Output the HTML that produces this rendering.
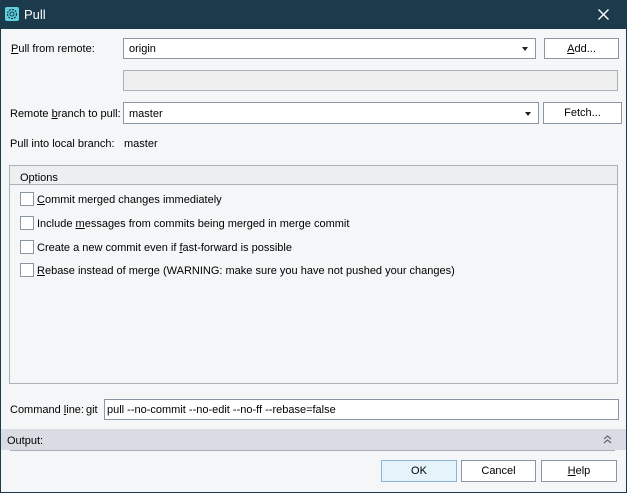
<!DOCTYPE html><html><head><style>
*{margin:0;padding:0;box-sizing:border-box}
body{width:627px;height:493px;background:#f5f6f7;font-family:"Liberation Sans",sans-serif;font-size:11px;color:#000;position:relative;overflow:hidden}
.a{position:absolute}
.t{position:absolute;line-height:14px;white-space:nowrap}
.box{position:absolute;background:#fff;border:1px solid #8a96a3}
.btn{position:absolute;background:#fff;border:1px solid #8a96a3;text-align:center;line-height:20px}
.cb{position:absolute;left:20px;width:14px;height:14px;border:1px solid #8a96a3;background:#fff}
.arr{position:absolute;right:7px;top:8px;width:0;height:0;border-left:3.5px solid transparent;border-right:3.5px solid transparent;border-top:4px solid #222}
u{text-decoration:underline}
</style></head><body>
<div class="a" style="left:0;top:0;width:627px;height:29px;background:#1b3a4b"></div>
<div class="a" style="left:0;top:0;width:1px;height:493px;background:#1b3a4b"></div>
<div class="a" style="right:0;top:0;width:1px;height:493px;background:#1b3a4b"></div>
<div class="a" style="left:0;bottom:0;width:627px;height:1px;background:#1b3a4b"></div>
<div class="a" style="left:5px;top:7px;width:14px;height:14px;background:#5fd0dc;border-radius:2px"><svg width="14" height="14"><circle cx="7" cy="7" r="4.5" fill="none" stroke="#1b3a4b" stroke-width="1.2" stroke-dasharray="2 1"/><circle cx="7" cy="7" r="2" fill="none" stroke="#1b3a4b"/></svg></div>
<div class="t" style="left:24px;top:8px;color:#fff;font-size:13px">Pull</div>
<div class="a" style="left:598px;top:9px"><svg width="11" height="11"><path d="M0.5 0.5L10.5 10.5M10.5 0.5L0.5 10.5" stroke="#fff" stroke-width="1.4"/></svg></div>

<div class="t" style="left:11px;top:42px"><u>P</u>ull from remote:</div>
<div class="box" style="left:123px;top:38px;width:413px;height:21px"><div class="t" style="left:5px;top:3px">origin</div><div class="arr"></div></div>
<div class="btn" style="left:544px;top:38px;width:75px;height:21px"><u>A</u>dd...</div>
<div class="a" style="left:123px;top:70px;width:495px;height:21px;background:#efefef;border:1px solid #a8b0b8"></div>

<div class="t" style="left:10px;top:107px">Remote <u>b</u>ranch to pull:</div>
<div class="box" style="left:123px;top:102px;width:416px;height:22px"><div class="t" style="left:5px;top:4px">master</div><div class="arr" style="top:9px"></div></div>
<div class="btn" style="left:543px;top:102px;width:79px;height:22px">Fetch...</div>

<div class="t" style="left:10px;top:137px">Pull into local branch:</div>
<div class="t" style="left:124px;top:137px">master</div>

<div class="a" style="left:9px;top:165px;width:609px;height:219px;border:1px solid #a8b0b8;background:#f5f6f7"></div>
<div class="a" style="left:10px;top:166px;width:607px;height:19px;background:#eceef0;border-bottom:1px solid #a8b0b8"></div>
<div class="t" style="left:20px;top:171px">Options</div>
<div class="cb" style="top:192px"></div><div class="t" style="left:37px;top:193px"><u>C</u>ommit merged changes immediately</div>
<div class="cb" style="top:216px"></div><div class="t" style="left:37px;top:217px">Include <u>m</u>essages from commits being merged in merge commit</div>
<div class="cb" style="top:240px"></div><div class="t" style="left:37px;top:241px">Create a new commit even if <u>f</u>ast-forward is possible</div>
<div class="cb" style="top:263px"></div><div class="t" style="left:37px;top:264px"><u>R</u>ebase instead of merge (WARNING: make sure you have not pushed your changes)</div>

<div class="t" style="left:10px;top:403px">Command <u>l</u>ine:</div>
<div class="t" style="left:86px;top:403px">git</div>
<div class="box" style="left:104px;top:399px;width:515px;height:21px"><div class="t" style="left:2px;top:3px">pull --no-commit --no-edit --no-ff --rebase=false</div></div>

<div class="a" style="left:1px;top:429px;width:625px;height:21px;background:#d9dde3"></div>
<div class="a" style="left:10px;top:450px;width:605px;height:1px;background:#a8b0b8"></div>
<div class="t" style="left:7px;top:434px">Output:</div>
<div class="a" style="left:603px;top:435px"><svg width="9" height="9"><path d="M1 4L4.5 1L8 4M1 8L4.5 5L8 8" fill="none" stroke="#555" stroke-width="1.1"/></svg></div>

<div class="btn" style="left:381px;top:460px;width:76px;height:22px;background:#e5f3fb;border-color:#8ab3d6">OK</div>
<div class="btn" style="left:461px;top:460px;width:75px;height:22px">Cancel</div>
<div class="btn" style="left:541px;top:460px;width:76px;height:22px"><u>H</u>elp</div>
</body></html>
